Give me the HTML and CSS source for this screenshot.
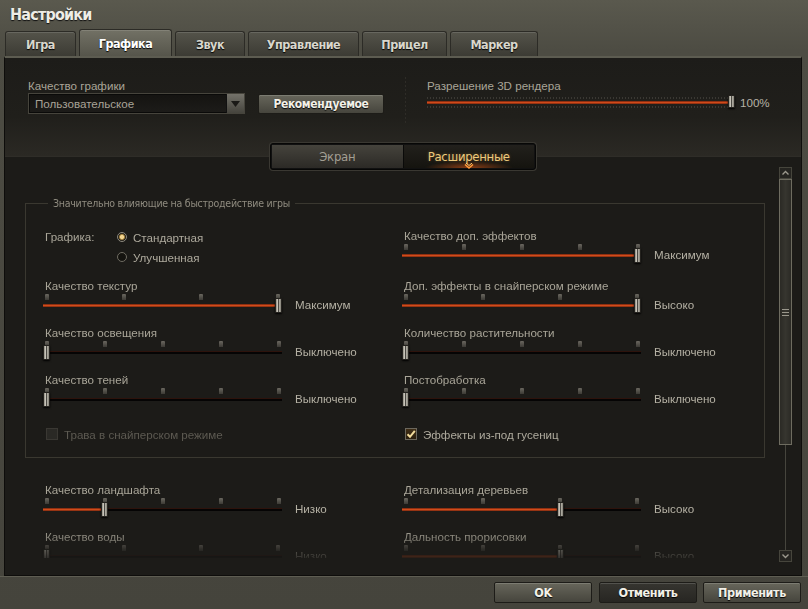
FILE: index.html
```html
<!DOCTYPE html>
<html lang="ru">
<head>
<meta charset="utf-8">
<title>Настройки</title>
<link rel="stylesheet" href="styles.css">
</head>
<body>
<div class="window">
  <div class="titlebar">Настройки</div>
  <div class="tabs">
    <div class="tab t1">Игра</div>
    <div class="tab t2 active">Графика</div>
    <div class="tab t3">Звук</div>
    <div class="tab t4">Управление</div>
    <div class="tab t5">Прицел</div>
    <div class="tab t6">Маркер</div>
  </div>
  <div class="panel">
    <div class="top">
      <div class="q">
        <div class="lbl">Качество графики</div>
        <div class="qrow">
          <div class="select">
            <span class="sel-text">Пользовательское</span>
            <span class="sel-btn"><svg width="9" height="6" viewBox="0 0 9 6"><polygon points="0,0 9,0 4.5,6" fill="#1b1a17"/></svg></span>
          </div>
          <div class="btn rec">Рекомендуемое</div>
        </div>
      </div>
      <div class="vdiv"></div>
      <div class="res">
        <div class="lbl">Разрешение 3D рендера</div>
        <div class="resrow">
          <div class="restrack"><div class="resline"></div><div class="thumb resthumb"></div></div>
          <span class="resval">100%</span>
        </div>
      </div>
    </div>

    <div class="seg">
      <div class="seg-item off">Экран</div>
      <div class="seg-item on">Расширенные
        <svg class="chev" width="12" height="8" viewBox="0 0 12 8"><polyline points="2,1.5 6,5 10,1.5" fill="none" stroke="#ff9a3a" stroke-width="1.6"/><polyline points="3,0 6,2.5 9,0" fill="none" stroke="#ffcf7a" stroke-width="1"/></svg>
      </div>
    </div>

    <div class="scroll">
      <div class="viewport">
        <div class="group">
          <div class="legend">Значительно влияющие на быстродействие игры</div>
          <div class="grid">
            <div class="radios">
              <span class="rlabel">Графика:</span>
              <div class="rlist">
                <div class="ritem"><span class="radio sel"></span>Стандартная</div>
                <div class="ritem"><span class="radio"></span>Улучшенная</div>
              </div>
            </div>
            <div class="sl first" style="--v:1">
              <div class="lbl">Качество доп. эффектов</div>
              <div class="slrow"><div class="track"><div class="ticks"><i></i><i></i><i></i><i></i><i></i></div><div class="line"><div class="fill"></div></div><div class="thumb"></div></div><span class="val">Максимум</span></div>
            </div>

            <div class="sl" style="--v:1">
              <div class="lbl">Качество текстур</div>
              <div class="slrow"><div class="track"><div class="ticks"><i></i><i></i><i></i><i></i></div><div class="line"><div class="fill"></div></div><div class="thumb"></div></div><span class="val">Максимум</span></div>
            </div>
            <div class="sl" style="--v:1">
              <div class="lbl">Доп. эффекты в снайперском режиме</div>
              <div class="slrow"><div class="track"><div class="ticks"><i></i><i></i><i></i><i></i></div><div class="line"><div class="fill"></div></div><div class="thumb"></div></div><span class="val">Высоко</span></div>
            </div>

            <div class="sl" style="--v:0">
              <div class="lbl">Качество освещения</div>
              <div class="slrow"><div class="track"><div class="ticks"><i></i><i></i><i></i><i></i><i></i></div><div class="line"><div class="fill"></div></div><div class="thumb"></div></div><span class="val">Выключено</span></div>
            </div>
            <div class="sl" style="--v:0">
              <div class="lbl">Количество растительности</div>
              <div class="slrow"><div class="track"><div class="ticks"><i></i><i></i><i></i><i></i><i></i></div><div class="line"><div class="fill"></div></div><div class="thumb"></div></div><span class="val">Выключено</span></div>
            </div>

            <div class="sl" style="--v:0">
              <div class="lbl">Качество теней</div>
              <div class="slrow"><div class="track"><div class="ticks"><i></i><i></i><i></i><i></i><i></i></div><div class="line"><div class="fill"></div></div><div class="thumb"></div></div><span class="val">Выключено</span></div>
            </div>
            <div class="sl" style="--v:0">
              <div class="lbl">Постобработка</div>
              <div class="slrow"><div class="track"><div class="ticks"><i></i><i></i><i></i><i></i><i></i></div><div class="line"><div class="fill"></div></div><div class="thumb"></div></div><span class="val">Выключено</span></div>
            </div>

            <div class="check disabled"><span class="cb"></span>Трава в снайперском режиме</div>
            <div class="check right"><span class="cb on"><svg width="10" height="10" viewBox="0 0 10 10"><path d="M1.5 5.2 L4 7.8 L8.8 1.8" fill="none" stroke="#f3dc9c" stroke-width="2"/></svg></span>Эффекты из-под гусениц</div>
          </div>
        </div>

        <div class="grid grid2">
          <div class="sl" style="--v:0.25">
            <div class="lbl">Качество ландшафта</div>
            <div class="slrow"><div class="track"><div class="ticks"><i></i><i></i><i></i><i></i><i></i></div><div class="line"><div class="fill"></div></div><div class="thumb"></div></div><span class="val">Низко</span></div>
          </div>
          <div class="sl" style="--v:0.6667">
            <div class="lbl">Детализация деревьев</div>
            <div class="slrow"><div class="track"><div class="ticks"><i></i><i></i><i></i><i></i></div><div class="line"><div class="fill"></div></div><div class="thumb"></div></div><span class="val">Высоко</span></div>
          </div>
          <div class="sl" style="--v:0">
            <div class="lbl">Качество воды</div>
            <div class="slrow"><div class="track"><div class="ticks"><i></i><i></i><i></i><i></i></div><div class="line"><div class="fill"></div></div><div class="thumb"></div></div><span class="val">Низко</span></div>
          </div>
          <div class="sl" style="--v:0.6667">
            <div class="lbl">Дальность прорисовки</div>
            <div class="slrow"><div class="track"><div class="ticks"><i></i><i></i><i></i><i></i></div><div class="line"><div class="fill"></div></div><div class="thumb"></div></div><span class="val">Высоко</span></div>
          </div>
        </div>
      </div>

      <div class="sbar">
        <div class="sb-btn"><svg width="11" height="10" viewBox="0 0 11 10"><polyline points="2.5,6.5 5.5,3.5 8.5,6.5" fill="none" stroke="#9c998e" stroke-width="1.4"/></svg></div>
        <div class="sb-thumb"><span class="grip"></span></div>
        <div class="sb-track"></div>
        <div class="sb-btn"><svg width="11" height="10" viewBox="0 0 11 10"><polyline points="2.5,3.5 5.5,6.5 8.5,3.5" fill="none" stroke="#9c998e" stroke-width="1.4"/></svg></div>
      </div>
    </div>
  </div>
  <div class="bottombar">
    <div class="btn bb">OK</div>
    <div class="btn bb dark">Отменить</div>
    <div class="btn bb">Применить</div>
  </div>
</div>
</body>
</html>
```

FILE: styles.css
```css
* { box-sizing: border-box; margin: 0; padding: 0; }
html, body { width: 808px; height: 609px; overflow: hidden; }
body {
  background: #4a4940;
  font-family: "Liberation Sans", Arial, sans-serif;
  font-size: 11.6px;
  color: #aaa699;
}
.window {
  display: flex;
  flex-direction: column;
  height: 609px;
  background: linear-gradient(#5a594e, #4d4c43 50px, #45443c);
}

.titlebar {
  height: 28px;
  padding-left: 10px;
  line-height: 29px;
  font-family: "DejaVu Sans Condensed", "DejaVu Sans", sans-serif;
  font-stretch: condensed;
  font-weight: bold;
  font-size: 16px;
  letter-spacing: -0.8px;
  color: #eeede6;
  text-shadow: 0 1px 1px #111;
}

.tabs {
  height: 28px;
  display: flex;
  align-items: flex-end;
  gap: 3px;
  padding-left: 5px;
}
.tab {
  height: 25px;
  line-height: 26px;
  text-align: center;
  border: 1px solid #2c2b26;
  border-bottom: none;
  border-radius: 3px 3px 0 0;
  background: linear-gradient(#54534a, #3c3b34);
  box-shadow: inset 0 1px 0 rgba(255,255,255,0.12);
  font-family: "DejaVu Sans Condensed", "DejaVu Sans", sans-serif;
  font-stretch: condensed;
  font-weight: bold;
  font-size: 12.5px;
  letter-spacing: -0.5px;
  color: #d9d7cd;
  text-shadow: 0 1px 1px #000;
}
.tab.active {
  height: 27px;
  line-height: 28px;
  background: linear-gradient(#727165, #56554b);
  color: #ffffff;
}
.t1 { width: 71px; }
.t2 { width: 93px; }
.t3 { width: 70px; }
.t4 { width: 111px; }
.t5 { width: 85px; }
.t6 { width: 88px; }

.panel {
  height: 520px;
  margin: 0 6px 0 4px;
  background: #1c1b18;
  border: 1px solid #0e0d0b;
  border-top: 2px solid #5d5c51;
  display: flex;
  flex-direction: column;
}

.top {
  height: 99px;
  display: grid;
  grid-template-columns: 377px 1px 1fr;
  padding: 21px 0 0 23px;
  background: linear-gradient(#1d1c19, #201f1b 60%, #2b2924);
  border-bottom: 1px solid #2f2d28;
}
.lbl { line-height: 14px; height: 14px; white-space: nowrap; color: #a9a598; }
.qrow { display: flex; gap: 13px; }
.select {
  width: 217px;
  height: 21px;
  display: flex;
  align-items: center;
  justify-content: space-between;
  border: 1px solid #46443c;
  background: linear-gradient(#141311, #1d1c19);
  box-shadow: inset 0 0 0 1px #0a0a09;
  padding-left: 6px;
}
.sel-text { color: #a8a397; }
.sel-btn {
  width: 18px;
  height: 19px;
  display: flex;
  align-items: center;
  justify-content: center;
  background: linear-gradient(#74726a, #45443d);
  border-left: 1px solid #111;
}
.btn {
  display: flex;
  align-items: center;
  justify-content: center;
  border: 1px solid #1d1c18;
  border-radius: 2px;
  background: linear-gradient(#67665b, #46453d);
  box-shadow: inset 0 1px 0 rgba(255,255,255,0.15);
  font-family: "DejaVu Sans Condensed", "DejaVu Sans", sans-serif;
  font-stretch: condensed;
  font-weight: bold;
  font-size: 12px;
  letter-spacing: -0.4px;
  color: #f2f0e8;
  text-shadow: 0 1px 1px #000;
}
.rec { width: 126px; height: 20px; margin-top: 1px; }

.vdiv {
  height: 46px;
  margin-top: -2px;
  background: repeating-linear-gradient(#2e2c27 0 2px, transparent 2px 4px);
}
.res { padding-left: 21px; }
.resrow { display: flex; align-items: center; margin-top: 2px; height: 14px; }
.restrack {
  position: relative;
  width: 308px;
  height: 13px;
  background:
    repeating-linear-gradient(to right, #3a3833 0 1px, transparent 1px 3px) 0 1px / 100% 2px no-repeat,
    repeating-linear-gradient(to right, #3a3833 0 1px, transparent 1px 3px) 0 10px / 100% 2px no-repeat;
}
.resline {
  position: absolute;
  left: 0; right: 3px; top: 5px;
  height: 3px;
  background: linear-gradient(#6e220e, #cf4a1a 50%, #7a2810);
}
.resval { margin-left: 5px; color: #b6b2a6; }

.thumb {
  position: absolute;
  width: 7px;
  height: 15px;
  border: 1px solid #24221e;
  border-radius: 1px;
  background: linear-gradient(to right, #8c897f, #c6c3b8 30%, #4a4842 45%, #4a4842 58%, #bab7ac 72%, #7a776e);
  box-shadow: 0 1px 2px #000;
}
.resthumb { right: 0; top: -1px; height: 13px; }

.seg {
  width: 266px;
  height: 27px;
  margin: -14px auto 0;
  display: flex;
  border: 1px solid #070706;
  border-radius: 3px;
  box-shadow: 0 0 0 1px #3a3832;
  background: #111;
  padding: 1px;
}
.seg-item {
  flex: 1;
  display: flex;
  align-items: center;
  justify-content: center;
  font-family: "DejaVu Sans Condensed", "DejaVu Sans", sans-serif;
  font-stretch: condensed;
  font-size: 13px;
  letter-spacing: -0.3px;
  position: relative;
}
.seg-item.off {
  background: linear-gradient(#45433c, #2c2a26);
  color: #a29e93;
  border-right: 1px solid #0a0a09;
}
.seg-item.on {
  background:
    radial-gradient(ellipse 44px 7px at 50% 100%, rgba(235,95,25,0.55), transparent),
    linear-gradient(#22201c, #15140f);
  color: #ecc97c;
  text-shadow: 0 0 3px rgba(240,170,70,0.35);
}
.chev { position: absolute; left: 59px; bottom: -3px; }

.scroll {
  display: flex;
  margin-top: -3px;
  height: 395px;
  align-items: flex-start;
}
.viewport {
  width: 769px;
  height: 391px;
  overflow: hidden;
  -webkit-mask-image: linear-gradient(#000 0, #000 362px, rgba(0,0,0,0.15) 391px);
  mask-image: linear-gradient(#000 0, #000 362px, rgba(0,0,0,0.15) 391px);
}

.group {
  margin: 36px 9px 0 20px;
  border: 1px solid #3a3830;
  padding: 0 0 17px 19px;
}
.legend {
  display: table;
  margin: -8px 0 0 3px;
  padding: 0 5px;
  background: #1c1b18;
  line-height: 14px;
  font-family: "DejaVu Sans Condensed", "DejaVu Sans", sans-serif;
  font-stretch: condensed;
  font-size: 10.5px;
  letter-spacing: -0.25px;
  color: #8f8b7f;
}
.grid {
  display: grid;
  grid-template-columns: 359px 1fr;
  row-gap: 12px;
  margin-top: 17px;
}
.grid2 { margin: 25px 0 0 40px; }

.radios { display: flex; height: 40px; }
.rlabel { width: 72px; line-height: 20px; }
.ritem { display: flex; align-items: center; height: 20px; gap: 6px; color: #aeaa9d; }
.radio {
  width: 10px;
  height: 10px;
  border-radius: 50%;
  border: 1px solid #6f6c62;
  background: #14130f;
}
.radio.sel {
  border-color: #8e8a7f;
  background: radial-gradient(circle, #f2d490 0 1.6px, #9a7a3a 2.6px, #1a1813 3.6px);
}

.sl.first { margin-top: 2px; }
.slrow { display: flex; }
.track {
  position: relative;
  width: 239px;
  height: 21px;
  margin-left: -2px;
}
.ticks {
  display: flex;
  justify-content: space-between;
  padding: 0 1.5px;
  margin-top: 1px;
  height: 6px;
}
.ticks i {
  display: block;
  width: 4px;
  height: 6px;
  border-radius: 1px 1px 0 0;
  background: linear-gradient(#6a675f, #3c3a35);
}
.line {
  height: 3px;
  margin-top: 4px;
  background: #050404;
  border-top: 1px solid #2e130c;
}
.fill {
  height: 3px;
  margin-top: -1px;
  width: calc(var(--v) * 232px + 4px);
  background: linear-gradient(#6e220e, #d04c1a 50%, #7a2810);
}
.track .thumb { top: 5px; left: calc(var(--v) * 232px); }
.val { margin-left: 13px; margin-top: 5px; line-height: 14px; color: #b5b1a4; }

.check {
  display: flex;
  align-items: center;
  gap: 6px;
  height: 12px;
  margin-top: 8px;
  color: #aeaa9d;
}
.check.right { padding-left: 1px; }
.cb {
  width: 12px;
  height: 12px;
  border: 1px solid #6c685d;
  background: linear-gradient(#3f2e16, #2a1e0e);
  display: flex;
  align-items: center;
  justify-content: center;
}
.check.disabled { color: #5d5a52; padding-left: 1px; }
.check.disabled .cb { border-color: #3a3833; background: #2a2925; }

.sbar {
  width: 27px;
  padding: 0 9px 0 5px;
  display: flex;
  flex-direction: column;
  height: 395px;
}
.sb-btn {
  height: 12px;
  border: 1px solid #46453c;
  background: #252420;
  display: flex;
  align-items: center;
  justify-content: center;
}
.sb-thumb {
  height: 266px;
  border: 1px solid #6e6c60;
  background: linear-gradient(to right, #2b2a25, #36352f 50%, #2b2a25);
  display: flex;
  align-items: center;
  justify-content: center;
}
.grip {
  width: 7px;
  height: 7px;
  background: repeating-linear-gradient(#9a978c 0 1px, transparent 1px 3px);
}
.sb-track {
  flex: 1;
  width: 1px;
  margin: 0 auto;
  background: #46453d;
}

.bottombar {
  flex: 1;
  display: flex;
  justify-content: flex-end;
  align-items: flex-start;
  gap: 6px;
  padding: 5px 7px 0 0;
  border-top: 1px solid #5e5d52;
}
.bb { width: 98px; height: 21px; font-size: 12.5px; }
.bb.dark {
  background: linear-gradient(#363530, #272622);
  margin-left: 1px;
}
```
